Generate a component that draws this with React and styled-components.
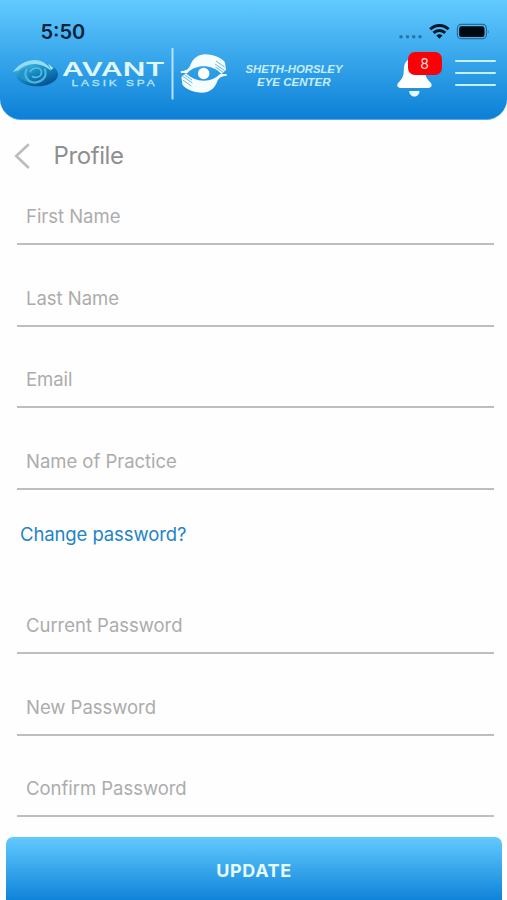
import React from "react";
import styled, { createGlobalStyle } from "styled-components";

const Global = createGlobalStyle`
  * { box-sizing: border-box; }
  body { margin: 0; background: #fff; font-family: Inter, "Liberation Sans", sans-serif; }
  button { font: inherit; border: 0; padding: 0; background: none; cursor: pointer; }
`;

const Screen = styled.div`
  width: 507px;
  height: 900px;
  overflow: hidden;
  display: flex;
  flex-direction: column;
  background: #fefefe;
`;

const Header = styled.header`
  height: 119.5px;
  flex: none;
  border-radius: 0 0 21px 21px;
  background: linear-gradient(#62caff 0%, #0b80d6 100%);
  border-bottom: 1px solid #58a9e2;
`;

const StatusBar = styled.div`
  height: 47px;
  padding: 17px 17px 0 40.5px;
  display: flex;
  justify-content: space-between;
`;

const Clock = styled.time`
  font-size: 20px;
  line-height: 30px;
  font-weight: 600;
  color: #06223a;
`;

const StatusIcons = styled.svg`
  width: 92px;
  height: 24px;
  margin-top: 3px;
`;

const BrandBar = styled.div`
  display: flex;
  align-items: flex-start;
  padding-right: 10px;
`;

const Logos = styled.svg`
  width: 350px;
  height: 56px;
`;

const BellButton = styled.button`
  position: relative;
  width: 46px;
  height: 50px;
  margin-left: 46px;
`;

const BellIcon = styled.svg`
  display: block;
  width: 46px;
  height: 50px;
`;

const Badge = styled.span`
  position: absolute;
  left: 11.5px;
  top: 4.5px;
  width: 34px;
  height: 23px;
  border-radius: 7px;
  background: #fb0007;
  color: #ffdcdc;
  font-size: 14px;
  line-height: 23px;
  text-align: center;
`;

const MenuButton = styled.button`
  width: 41px;
  margin: 13px 0 0 13px;
  display: flex;
  flex-direction: column;
  gap: 10px;
`;

const MenuLine = styled.span`
  width: 41px;
  height: 2px;
  border-radius: 1px;
  background: #c5f0ff;
`;

const TitleRow = styled.div`
  height: 71.5px;
  flex: none;
  display: flex;
  align-items: center;
  padding: 1px 0 0 14px;
`;

const BackIcon = styled.svg`
  display: block;
  width: 18px;
  height: 28px;
`;

const Title = styled.h1`
  margin: 0 0 0 21.5px;
  font-size: 24px;
  font-weight: 400;
  line-height: 30px;
  letter-spacing: -0.4px;
  color: #8f8f8f;
`;

const Fields = styled.form`
  flex: none;
  display: flex;
  flex-direction: column;
  gap: 27.55px;
  padding: 0 13px 0 16.5px;
`;

const Field = styled.label`
  height: 54px;
  border-bottom: 2px solid #bebebe;
  padding: 10px 9.5px 0;
  font-size: 18.5px;
  line-height: 30px;
  letter-spacing: -0.03px;
  color: #acacac;
`;

const PasswordLink = styled.button`
  align-self: flex-start;
  margin: 29.5px 0 51px 20px;
  && {
    font-size: 18.5px;
    line-height: 30px;
  }
  letter-spacing: -0.1px;
  color: #2384c6;
`;

const UpdateButton = styled.button`
  flex: none;
  height: 66px;
  margin: 19.5px 5px 0 6px;
  border-radius: 7px 7px 0 0;
  background: linear-gradient(#62caff 0%, #0b80d6 100%);
  color: #e6faff;
  && {
    font-size: 18px;
    font-weight: 700;
    line-height: 67px;
  }
  letter-spacing: 0.6px;
`;

function PhoneStatus() {
  return (
    <StatusIcons viewBox="398 20 92 24">
      <g fill="#2677a8">
        <circle cx="401" cy="36.7" r="1.8" />
        <circle cx="407.5" cy="36.7" r="1.8" />
        <circle cx="413.7" cy="36.7" r="1.8" />
        <circle cx="420" cy="36.7" r="1.8" />
      </g>
      <g fill="none" stroke="#03182a" strokeWidth="3">
        <path d="M430.2 29.3a13 13 0 0 1 18.4 0" />
        <path d="M433.6 32.9a8.2 8.2 0 0 1 11.6 0" />
      </g>
      <path d="M439.4 38.8l-3.1-3.2a4.5 4.5 0 0 1 6.2 0z" fill="#03182a" />
      <rect x="457.4" y="24.3" width="29" height="14.4" rx="4" fill="none" stroke="#276f99" strokeWidth="1.2" />
      <rect x="459.2" y="26.3" width="25.3" height="10.6" rx="2.2" fill="#000811" />
      <path d="M487.8 29.4q1.8 2.1 0 4.4z" fill="#276f99" />
    </StatusIcons>
  );
}

function Hand({ turned }) {
  return (
    <g transform={turned ? "rotate(180 203.7 73.5)" : undefined}>
      <path
        d="M180.5 71.2C186 71 188.500 69 190 66C193 57.500 199 54.300 205 54.300C214 54.500 222 58 225 62.500L226 70L221.500 74C213 64.500 196 63.500 187.500 73L181 73Z"
        fill="#f5fdff"
      />
      <path
        d="M216 61L224.500 67M215 64L224.500 70.500M215.500 67L223 72.200"
        fill="none"
        stroke="#52b1e8"
        strokeWidth=".9"
      />
    </g>
  );
}

function BrandLogos() {
  return (
    <Logos viewBox="0 47 350 56">
      <defs>
        <linearGradient id="lens" x1="0" y1="0" x2=".7" y2="1">
          <stop offset="0" stopColor="#55c7ed" />
          <stop offset=".5" stopColor="#168bc4" />
          <stop offset="1" stopColor="#034f92" />
        </linearGradient>
      </defs>
      <ellipse cx="37" cy="74.3" rx="21" ry="12" fill="url(#lens)" />
      <path d="M12.3 73.2C20 61 36 56 46 64C49 66 50 68 51 71C41 61.500 27 62 18 70.500C16 70.500 14 71.500 12.300 73.200Z" fill="#93dcf2" />
      <path d="M18.500 74C22 69.500 26 67.500 29 67.500C25.500 72 26 79 32 83C26 82 20.500 79 18.500 74Z" fill="#2194cb" />
      <path d="M27 68.500C22.500 76 29 83.500 36 82.400C44 81 47.500 75 44.500 68.600" fill="none" stroke="#4fb5dc" strokeWidth="2.200" />
      <path d="M30 72C33 66.500 41 67 41.500 72C41.500 77 36 78.500 32 76.500" fill="none" stroke="#58bde2" strokeWidth="1.600" />
      <path d="M48 63.500L53.500 68L51 70Z" fill="#a8e7f8" />
      <text x="62" y="76.3" textLength="103" lengthAdjust="spacingAndGlyphs" fontFamily="Inter, sans-serif" fontSize="18.5" fontWeight="600" fill="#dff7ff">AVANT</text>
      <text x="71.500" y="85.800" textLength="86" lengthAdjust="spacingAndGlyphs" letterSpacing="2.2" fontFamily="Liberation Sans, sans-serif" fontSize="9" fontWeight="400" fill="#b9e6fb" stroke="#b9e6fb" strokeWidth=".3">LASIK SPA</text>
      <rect x="171.500" y="48" width="2" height="51.500" fill="#b4e2fa" />
      <Hand />
      <Hand turned />
      <circle cx="203.700" cy="73.500" r="5.700" fill="#fff" />
      <g fill="#c7edff" fontFamily="Liberation Sans, sans-serif" fontSize="11" fontWeight="700" fontStyle="italic">
        <text x="245.500" y="72.600" textLength="97" lengthAdjust="spacingAndGlyphs">SHETH-HORSLEY</text>
        <text x="257" y="86" textLength="73.500" lengthAdjust="spacingAndGlyphs">EYE CENTER</text>
      </g>
    </Logos>
  );
}

export default function App() {
  return (
    <>
      <Global />
      <Screen>
        <Header>
          <StatusBar>
            <Clock>5:50</Clock>
            <PhoneStatus />
          </StatusBar>
          <BrandBar>
            <BrandLogos />
            <BellButton aria-label="Notifications">
              <BellIcon viewBox="396 47 46 50">
                <path d="M414 58C406.500 58 403.800 64 403.800 70C403.800 77 401.500 79.500 398.500 82.500C396 85.500 397.500 88 401.500 88H427.500C431.500 88 432.800 85.500 430.500 82.500C427.500 79.500 425 77 425 70C425 63 421.500 58 414 58Z" fill="#fff" />
                <path d="M409.200 91H419.500C419.500 98.300 409.200 98.300 409.200 91Z" fill="#e9f8ff" />
              </BellIcon>
              <Badge>8</Badge>
            </BellButton>
            <MenuButton aria-label="Menu">
              <MenuLine />
              <MenuLine />
              <MenuLine />
            </MenuButton>
          </BrandBar>
        </Header>
        <TitleRow>
          <BackIcon viewBox="0 0 18 28">
            <path d="M14.800 2.300L2.200 14L14.800 26" fill="none" stroke="#bcbcbc" strokeWidth="2.600" />
          </BackIcon>
          <Title>Profile</Title>
        </TitleRow>
        <Fields>
          <Field>First Name</Field>
          <Field>Last Name</Field>
          <Field>Email</Field>
          <Field>Name of Practice</Field>
        </Fields>
        <PasswordLink>Change password?</PasswordLink>
        <Fields>
          <Field>Current Password</Field>
          <Field>New Password</Field>
          <Field>Confirm Password</Field>
        </Fields>
        <UpdateButton>UPDATE</UpdateButton>
      </Screen>
    </>
  );
}
